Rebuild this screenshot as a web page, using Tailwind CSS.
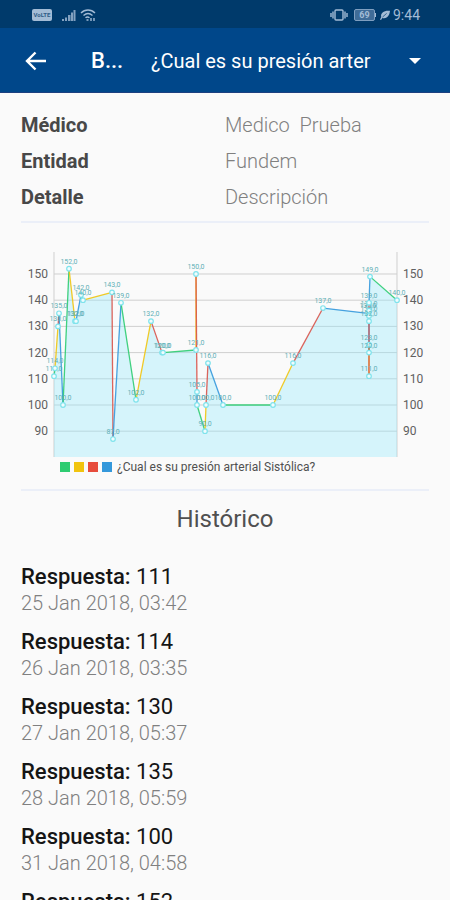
<!DOCTYPE html>
<html lang="es">

<head>
  <title>Histórico</title>
  <meta charset="UTF-8">
  <meta name="viewport" content="width=device-width, initial-scale=1.0">
  <script src="https://cdn.jsdelivr.net/npm/@tailwindcss/browser@4"></script>
</head>

<body class="h-dvh flex flex-col overflow-hidden bg-[#fafafa] font-[Roboto,sans-serif]">

  <!-- status bar -->
  <div class="h-7 shrink-0 flex items-center justify-between bg-[#003a6b] pl-8 pr-[30px] pt-px text-[#a3bcd6]">
    <div class="flex items-center">
      <span class="w-5 h-3 rounded-xs bg-[#a3bcd6] text-[6px] leading-3 text-center font-bold text-[#2f5c88]">VoLTE</span>
      <svg class="w-4 h-3 ml-[9px]" viewBox="0 0 16 12" fill="currentColor">
        <path d="M1 10h2v2H1zM4 8.500h2V12H4zM7 6h2.500v6H7zM10 3.500h2V12h-2zM12.500 1h2v11h-2z" opacity=".8"/>
      </svg>
      <svg class="w-4 h-3 ml-[3px]" viewBox="0 0 16 12" fill="none" stroke="currentColor" stroke-width="1.4">
        <path d="M1 4c4-4 10-4 14 0M3.500 6.500c3-2.700 6-2.700 9 0M5.500 8.800c1.300-1.200 2.600-1.200 4 0"/>
        <path d="M6.500 11h2M11 9v3M14 9v3"/>
      </svg>
    </div>
    <div class="flex items-center">
      <svg class="w-[18px] h-3" viewBox="0 0 18 12" fill="none" stroke="currentColor" stroke-width="1.4">
        <rect x="5" y="1" width="8" height="10" rx="1"/>
        <path d="M3 2.500v7M1 4v4M15 2.500v7M17 4v4"/>
      </svg>
      <span class="ml-[6px] w-[21px] h-3 rounded-xs border border-[#7f9fc0] bg-[#3f6c98] text-[9px] leading-[10px] text-center font-bold">69</span>
      <span class="w-px h-1 bg-[#a3bcd6]"></span>
      <svg class="w-[10px] h-[10px] ml-1" viewBox="0 0 12 12" fill="currentColor">
        <path d="M12 1C6 0 0 3 1.500 8.500L0 11.500l1.200.5 1.600-2.500C9 11 11.500 6 12 1z"/>
        <path d="M3 8.500 8 4" stroke="#003a6b" stroke-width=".8"/>
      </svg>
      <span class="ml-[3px] text-[14px] leading-7">9:44</span>
    </div>
  </div>

  <!-- app bar -->
  <header class="h-[65px] shrink-0 flex items-center bg-[#00478a] border-b border-[#1d4080] text-white pl-6 pr-7 pt-px">
    <button type="button" aria-label="Atrás" class="w-6 h-6">
      <svg viewBox="0 0 24 24" fill="none" stroke="currentColor" stroke-width="2.400">
        <path d="M22 12H3M11.500 3.500 3 12l8.500 8.500"/>
      </svg>
    </button>
    <h1 class="ml-[43px] w-8 text-[22px] font-medium whitespace-nowrap">B...</h1>
    <div class="relative ml-7 flex-1 min-w-0 flex items-center">
      <select aria-label="Pregunta" class="appearance-none w-full bg-transparent text-[20px] leading-7 outline-none">
        <option>¿Cual es su presión arter</option>
      </select>
      <svg class="absolute -right-px w-4 h-2 pointer-events-none" viewBox="0 0 16 8" fill="currentColor">
        <path d="M2 1h12L8 7z"/>
      </svg>
    </div>
  </header>

  <main class="flex-1 min-h-0 px-[21px]">
    <dl class="grid grid-cols-2 gap-y-3 pt-5 pb-3 text-[20px] leading-6 border-b-2 border-[#ebeff8]">
      <dt class="font-bold text-[#484848]">Médico</dt>
      <dd class="font-light text-[#808080] whitespace-pre">Medico  Prueba</dd>
      <dt class="font-bold text-[#484848]">Entidad</dt>
      <dd class="font-light text-[#808080]">Fundem</dd>
      <dt class="font-bold text-[#484848]">Detalle</dt>
      <dd class="font-light text-[#808080]">Descripción</dd>
    </dl>

    <figure class="pt-6 pb-3.5 border-b-2 border-[#ebeff8]">
      <svg id="chart" class="w-full" viewBox="21 247 408 210"></svg>
      <figcaption class="flex items-center gap-1 pl-[39px] pt-0.5 text-[12px] leading-4 text-[#505050]">
        <span class="w-[10px] h-[10px] bg-[#2ecc71]"></span>
        <span class="w-[10px] h-[10px] bg-[#f1c40f]"></span>
        <span class="w-[10px] h-[10px] bg-[#e74c3c]"></span>
        <span class="w-[10px] h-[10px] bg-[#3498db]"></span>
        <span class="ml-px">¿Cual es su presión arterial Sistólica?</span>
      </figcaption>
    </figure>

    <h2 class="pt-3 text-[24px] leading-8 text-center text-[#505050]">Histórico</h2>

    <ul id="answers" class="pt-7"></ul>
  </main>

  <script>
    const answers = [
      [111, '25 Jan 2018, 03:42'],
      [114, '26 Jan 2018, 03:35'],
      [130, '27 Jan 2018, 05:37'],
      [135, '28 Jan 2018, 05:59'],
      [100, '31 Jan 2018, 04:58'],
      [152, '03 Feb 2018, 05:12'],
    ]

    document.getElementById('answers').innerHTML = answers.map(([value, date]) => `
      <li class="pb-[13px]">
        <p class="text-[22px] leading-7 text-[#151515]"><span class="font-medium">Respuesta:</span> ${value}</p>
        <p class="text-[20px] leading-6 font-light text-[#808080]">${date}</p>
      </li>`).join('')

    // [x, value]
    const points = [
      [54, 111], [55, 114], [58, 130], [59, 135], [63, 100], [69, 152], [75, 132], [76, 132], [81, 142], [83, 140],
      [112, 143], [113, 87], [121, 139], [136, 102], [151, 132], [162, 120], [163, 120], [196, 121], [196, 150],
      [197, 105], [197, 100], [205, 90], [206, 100], [208, 116], [223, 100], [273, 100], [293, 116], [323, 137],
      [368, 135], [369, 134], [369, 136], [369, 132], [369, 123], [369, 120], [369, 111], [369, 139], [370, 149], [397, 140],
    ]
    const colors = ['#2ecc71', '#f1c40f', '#d9534a', '#3498db']
    const y = value => 274 + (150 - value) * 2.62
    const ticks = [150, 140, 130, 120, 110, 100, 90]
    const outline = points.map(([x, value]) => `${x},${y(value)}`).join(' ')

    document.getElementById('chart').innerHTML = `
      ${ticks.map(t => `
        <path d="M54 ${y(t)}H397" stroke="#cfcfcf"/>
        <text x="48" y="${y(t) + 4}" text-anchor="end" font-size="12" fill="#606060">${t}</text>
        <text x="403" y="${y(t) + 4}" font-size="12" fill="#606060">${t}</text>`).join('')}
      <path d="M54 252V457M397 252V457" stroke="#cfcfcf"/>
      <polygon points="54,457 ${outline} 397,457" fill="#8ceaff" fill-opacity=".33"/>
      ${points.slice(1).map(([x, value], i) => `
        <path d="M${points[i][0]} ${y(points[i][1])}L${x} ${y(value)}" stroke="${colors[i % 4]}" stroke-opacity=".9" stroke-width="1.3"/>`).join('')}
      ${points.map(([x, value]) => `
        <circle cx="${x}" cy="${y(value)}" r="2.300" fill="#f0fcfe" stroke="#7fe3ec" stroke-width="1.2"/>
        <text x="${x}" y="${y(value) - 5}" text-anchor="middle" font-size="7" fill="#5fb0b6">${value},0</text>`).join('')}`
  </script>

</body>
</html>
